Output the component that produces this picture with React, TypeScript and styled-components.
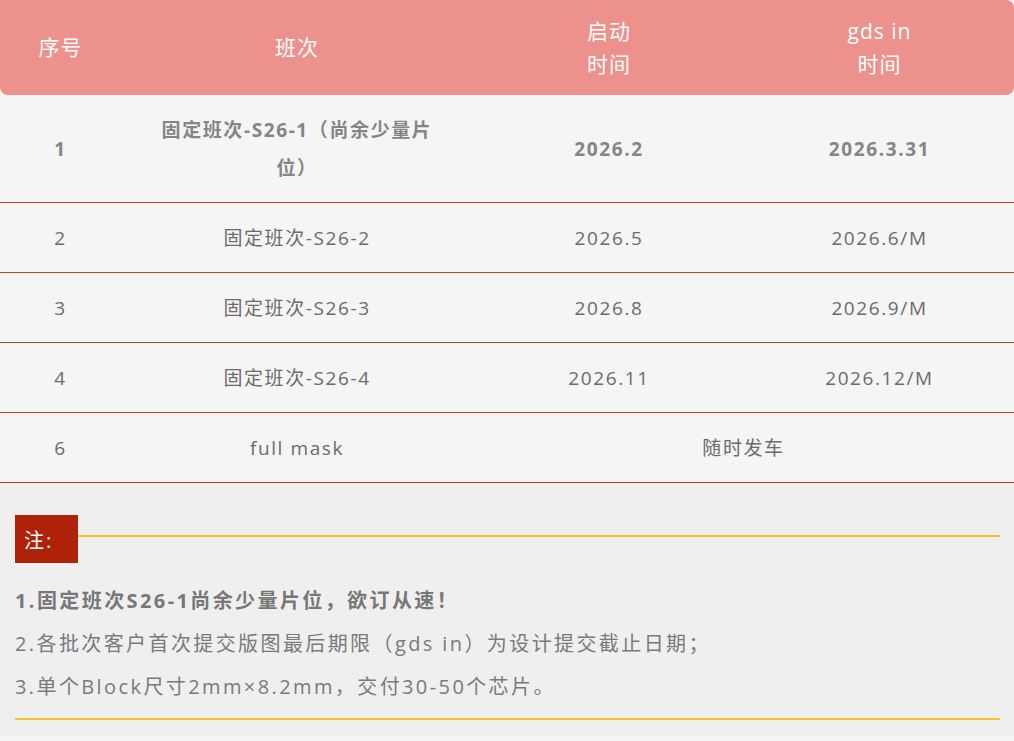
import React from "react";
import styled, { createGlobalStyle } from "styled-components";

const GlobalStyle = createGlobalStyle`
  body {
    margin: 0;
    background: #f5f5f5;
    font-family: "Open Sans", "Noto Sans CJK SC", sans-serif;
  }
`;

const Page = styled.div`
  width: 1014px;
  background: #f5f5f5;
  padding-bottom: 4px;
`;

const Table = styled.div`
  display: grid;
  grid-template-columns: 121px 352px 272px 269px;
`;

const Head = styled.div`
  display: contents;
`;

const HeadCell = styled.div<{ $first?: boolean; $last?: boolean }>`
  height: 95px;
  background: #ec918b;
  color: #fff;
  font-size: 21px;
  line-height: 33px;
  letter-spacing: 1px;
  display: flex;
  align-items: center;
  justify-content: center;
  text-align: center;
  border-radius: ${(p) => (p.$first ? "0 0 0 8px" : p.$last ? "0 8px 8px 0" : "0")};
`;

const Cell = styled.div<{ $bold?: boolean; $tall?: boolean; $span?: number }>`
  grid-column: span ${(p) => p.$span ?? 1};
  height: ${(p) => (p.$tall ? 107 : 69)}px;
  border-bottom: 1px solid #cf3a24;
  display: flex;
  align-items: center;
  justify-content: center;
  text-align: center;
  padding: 0 30px;
  color: ${(p) => (p.$bold ? "#858585" : "#6b6b6b")};
  font-weight: ${(p) => (p.$bold ? 700 : 400)};
  font-size: 19px;
  line-height: 38px;
  letter-spacing: 1.6px;
`;

const Notes = styled.div`
  background: #efefef;
  padding: 32px 14px 16px 15px;
`;

const NoteHeader = styled.div`
  display: flex;
  align-items: flex-start;
`;

const NoteTag = styled.div`
  width: 63px;
  height: 48px;
  background: #ae2209;
  color: #fff;
  font-size: 20px;
  display: flex;
  align-items: center;
  padding-left: 9px;
  box-sizing: border-box;
  letter-spacing: 2px;
`;

const YellowRule = styled.div`
  flex: 1;
  height: 2px;
  margin-top: 20px;
  background: #f7c12f;
`;

const NoteList = styled.div`
  padding: 16px 0 10px;
  border-bottom: 2px solid #f7c12f;
`;

const NoteLine = styled.p<{ $bold?: boolean }>`
  margin: 0;
  font-size: 20px;
  line-height: 43px;
  letter-spacing: 2.4px;
  color: ${(p) => (p.$bold ? "#777" : "#7a7a7a")};
  font-weight: ${(p) => (p.$bold ? 700 : 400)};
`;

const rows = [
  ["2", "固定班次-S26-2", "2026.5", "2026.6/M"],
  ["3", "固定班次-S26-3", "2026.8", "2026.9/M"],
  ["4", "固定班次-S26-4", "2026.11", "2026.12/M"],
];

export default function App() {
  return (
    <Page>
      <GlobalStyle />
      <Table>
        <Head>
          <HeadCell $first>序号</HeadCell>
          <HeadCell>班次</HeadCell>
          <HeadCell>
            启动
            <br />
            时间
          </HeadCell>
          <HeadCell $last>
            gds in
            <br />
            时间
          </HeadCell>
        </Head>
        <Cell $bold $tall>1</Cell>
        <Cell $bold $tall>固定班次-S26-1（尚余少量片位）</Cell>
        <Cell $bold $tall>2026.2</Cell>
        <Cell $bold $tall>2026.3.31</Cell>
        {rows.map((r) => (
          <React.Fragment key={r[0]}>
            {r.map((c, i) => (
              <Cell key={i}>{c}</Cell>
            ))}
          </React.Fragment>
        ))}
        <Cell>6</Cell>
        <Cell>full mask</Cell>
        <Cell $span={2}>随时发车</Cell>
      </Table>
      <Notes>
        <NoteHeader>
          <NoteTag>注:</NoteTag>
          <YellowRule />
        </NoteHeader>
        <NoteList>
          <NoteLine $bold>1.固定班次S26-1尚余少量片位，欲订从速！</NoteLine>
          <NoteLine>2.各批次客户首次提交版图最后期限（gds in）为设计提交截止日期；</NoteLine>
          <NoteLine>3.单个Block尺寸2mm×8.2mm，交付30-50个芯片。</NoteLine>
        </NoteList>
      </Notes>
    </Page>
  );
}
